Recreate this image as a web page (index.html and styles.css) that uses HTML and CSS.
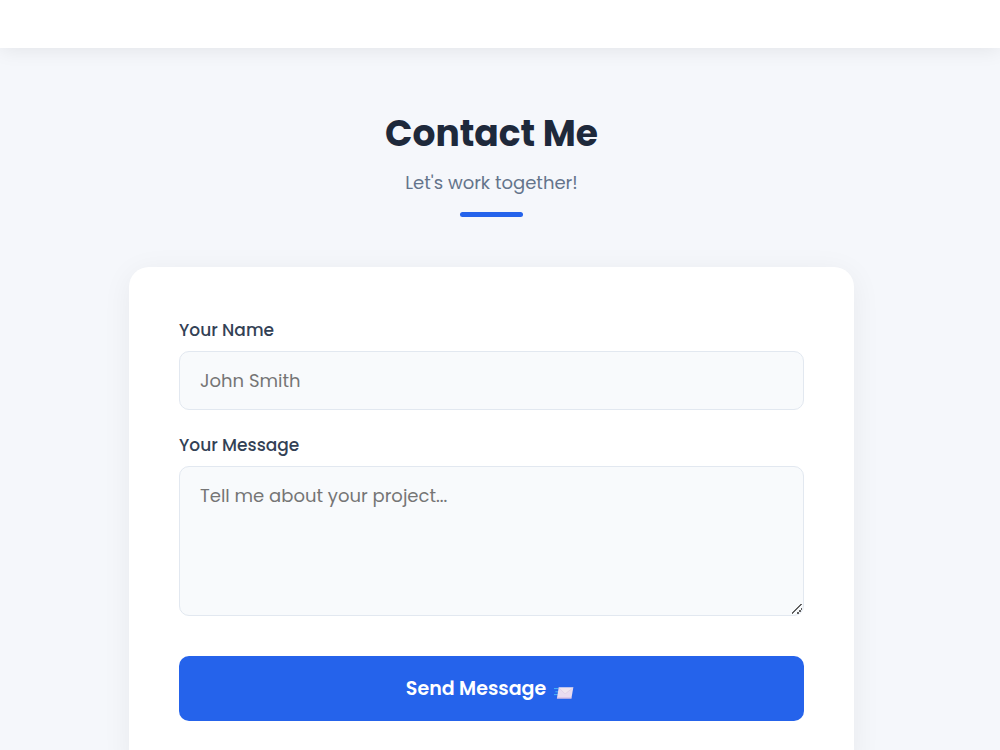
FILE: index.html
```html
<!DOCTYPE html>
<html lang="en">
<head>
  <meta charset="utf-8">
  <meta name="viewport" content="width=device-width, initial-scale=1">
  <title>Contact Me</title>
  <link rel="stylesheet" href="styles.css">
</head>
<body>
  <header class="navbar"></header>
  <main class="contact">
    <h1 class="title">Contact Me</h1>
    <p class="subtitle">Let's work together!</p>
    <div class="underline"></div>
    <form class="card">
      <div class="field">
        <label for="name">Your Name</label>
        <input class="control" id="name" type="text" placeholder="John Smith">
      </div>
      <div class="field">
        <label for="message">Your Message</label>
        <textarea class="control message" id="message" placeholder="Tell me about your project..."></textarea>
      </div>
      <button class="send" type="submit">
        <span>Send Message</span>
        <svg class="envelope" viewBox="0 0 23 12" aria-hidden="true">
          <path d="M0 1.6h4.6M1.4 4.8h3M0 7.6h3.8" stroke="#48b5f5" stroke-width="1"/>
          <path d="M4.7.6h14.6l-1.9 10.8H2.9z" fill="#eadcf0"/>
          <path d="M2.9 11.4h14.5l.2-1H3.1z" fill="#cdb2e2"/>
          <path d="M4.7.6l5.6 5.6c.5.5 1.1.5 1.7 0L19.3.6" fill="#f0e5f0" stroke="#d6c5df" stroke-width=".5"/>
        </svg>
      </button>
    </form>
  </main>
</body>
</html>
```
FILE: styles.css
```css
* {
  box-sizing: border-box;
  margin: 0;
}

body {
  background: #f5f7fb;
  color: #1e293b;
  font-family: Poppins, Inter, "Open Sans", sans-serif;
}

.navbar {
  height: 48px;
  background: #fff;
  box-shadow: 0 2px 20px rgba(0, 0, 0, 0.08);
}

.contact {
  display: flex;
  flex-direction: column;
  align-items: center;
  padding: 59px 37px 60px 20px;
}

.title {
  font-size: 36px;
  font-weight: 700;
  line-height: 54px;
}

.subtitle {
  margin-top: 7px;
  color: #64748b;
  font-size: 18px;
  line-height: 30px;
}

.underline {
  width: 63px;
  height: 5px;
  margin-top: 14px;
  border-radius: 5px;
  background: #2563eb;
}

.card {
  width: 100%;
  max-width: 725px;
  margin-top: 50px;
  padding: 50px;
  border-radius: 20px;
  background: #fff;
  box-shadow: 0 5px 30px rgba(0, 0, 0, 0.06);
}

.field {
  display: flex;
  flex-direction: column;
  gap: 8px;
  margin-bottom: 22px;
}

.field label {
  color: #334155;
  font-size: 17px;
  font-weight: 500;
  line-height: 26px;
}

.control {
  width: 100%;
  height: 59px;
  padding: 15px 20px;
  border: 1px solid #e2e8f0;
  border-radius: 10px;
  background: #f8fafc;
  color: #1e293b;
  font-family: inherit;
  font-size: 18px;
  line-height: 27px;
}

.control::placeholder {
  color: #757575;
}

.message {
  height: 150px;
  resize: vertical;
}

.message::-webkit-resizer {
  background: linear-gradient(135deg, transparent 44%, #606060 44% 54%, transparent 54% 70%, #606060 70% 80%, transparent 80%) 4px 4px / 10px 10px no-repeat;
}

.send {
  display: flex;
  align-items: center;
  justify-content: center;
  gap: 8px;
  width: 100%;
  height: 65px;
  margin-top: 40px;
  border: 0;
  border-radius: 10px;
  background: #2563eb;
  color: #fff;
  font-family: inherit;
  font-size: 19px;
  font-weight: 600;
}

.envelope {
  width: 23px;
  height: 12px;
  margin-top: 8px;
}
```
